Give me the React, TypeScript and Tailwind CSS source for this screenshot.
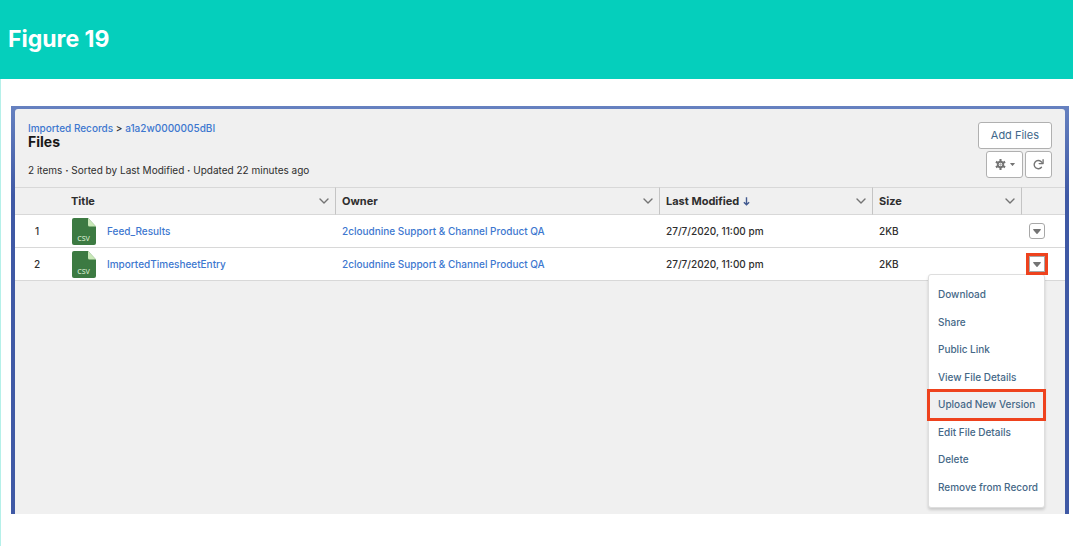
import { useState } from "react";
import { clsx } from "clsx";

const files = [
	{ title: "Feed_Results", owner: "2cloudnine Support & Channel Product QA", modified: "27/7/2020, 11:00 pm", size: "2KB" },
	{ title: "ImportedTimesheetEntry", owner: "2cloudnine Support & Channel Product QA", modified: "27/7/2020, 11:00 pm", size: "2KB" },
];

const menuItems = [
	"Download",
	"Share",
	"Public Link",
	"View File Details",
	"Upload New Version",
	"Edit File Details",
	"Delete",
	"Remove from Record",
];

function GearIcon() {
	return (
		<svg viewBox="0 0 24 24" className="size-[11px]" fill="none" stroke="#747474" aria-hidden="true">
			<circle cx="12" cy="12" r="6" strokeWidth="4" />
			<path d="M12 0v6M12 18v6M2 6l5 3M17 15l5 3M2 18l5-3M17 9l5-3" strokeWidth="4.500" />
			<circle cx="12" cy="12" r="1.500" strokeWidth="1.500" />
		</svg>
	);
}

function RefreshIcon() {
	return (
		<svg viewBox="0 0 24 24" className="size-[11px]" fill="none" stroke="#747474" aria-hidden="true">
			<path d="M18.500 18A9 9 0 1 1 17.500 5.500" strokeWidth="3" strokeLinecap="round" />
			<path d="M22 1.500v8.500h-8.500" strokeWidth="3" strokeLinecap="round" strokeLinejoin="round" />
			<path d="M17 5l4 4" strokeWidth="2.500" />
		</svg>
	);
}

function Chevron() {
	return (
		<svg viewBox="0 0 10 6" className="h-[6px] w-[10px]" fill="none" stroke="#747474" aria-hidden="true">
			<path d="M1 1l4 4 4-4" strokeWidth="1.400" strokeLinecap="round" strokeLinejoin="round" />
		</svg>
	);
}

function Caret({ className }: { className: string }) {
	return (
		<svg viewBox="0 0 8 5" className={className} fill="#747474" aria-hidden="true">
			<path d="M.6 0h6.800q.8.2.3.900L4.500 4.700q-.5.500-1 0L.3.900Q-.2.200.6 0z" />
		</svg>
	);
}

function CsvIcon() {
	return (
		<svg viewBox="0 0 24 27" className="h-[27px] w-6" role="img" aria-label="CSV file">
			<path d="M2 0h14l8 8.500V25a2 2 0 0 1-2 2H2a2 2 0 0 1-2-2V2a2 2 0 0 1 2-2z" fill="#3c7a42" />
			<path d="M16 0l8 8.500h-6.500A1.500 1.500 0 0 1 16 7z" fill="#c9e8b8" />
			<text x="11.500" y="22.500" textAnchor="middle" fill="#cfe6c9" className="font-['Noto_Sans',sans-serif] text-[7px]">
				CSV
			</text>
		</svg>
	);
}

function HeaderCell({ label, sorted, className }: { label: string; sorted?: boolean; className?: string }) {
	return (
		<th scope="col" className={clsx("border-y border-r border-y-[#d8d8d8] border-r-[#c4c4c4] p-0 text-left font-bold", className)}>
			<div className="flex items-center justify-between pr-1.5">
				<span className="flex items-center gap-1">
					{label}
					{sorted && (
						<svg viewBox="0 0 8 10" className="h-[9px] w-[7px]" fill="none" stroke="#41598f" aria-hidden="true">
							<path d="M4 0v8.500M1 5.800l3 3 3-3" strokeWidth="1.600" />
						</svg>
					)}
				</span>
				<button type="button" aria-label={`${label} column actions`}>
					<Chevron />
				</button>
			</div>
		</th>
	);
}

function RowMenu() {
	return (
		<ul className="absolute top-[18px] right-0 z-10 flex h-[234px] w-[117px] flex-col rounded-[3px] border border-[#dedede] bg-white py-1.5 shadow-[0_2px_3px_rgba(0,0,0,0.16)]">
			{menuItems.map((item) => (
				<li key={item} className="flex flex-1">
					<button
						type="button"
						className={clsx(
							"w-full pl-[9px] text-left text-[10px] whitespace-nowrap text-[#456887]",
							item === "Upload New Version" && "bg-[#f0f0f0] outline-[3px] -outline-offset-1 outline-[#ee421d]",
						)}
					>
						{item}
					</button>
				</li>
			))}
		</ul>
	);
}

export default function App() {
	const [openRow, setOpenRow] = useState<number | null>(1);

	return (
		<div className="min-h-screen border-l border-[#b5f0e9] bg-white font-[Inter,'Liberation_Sans',sans-serif] text-[#2e2e2e]">
			<header className="-ml-px flex h-[79px] items-center bg-[#05cfbc] pb-0.5 pl-2">
				<h1 className="text-[23px] leading-7 font-bold text-white">Figure 19</h1>
			</header>

			<main className="pt-[27px] pr-1 pl-[10px]">
				<div className="bg-[linear-gradient(#6681c0,#3f59a5_90px)] px-1 pt-[3px]">
					<section className="min-h-[405px] rounded-t-[3px] bg-[#f0f0f0]">
						<div className="flex h-[78px] items-start justify-between px-[13px] pt-[13px]">
							<div>
								<nav className="text-[10px] leading-3 font-medium" aria-label="Breadcrumb">
									<a href="#records" className="text-[#3d77cf]">Imported Records</a>
									{" > "}
									<a href="#record" className="text-[#3d77cf]">a1a2w0000005dBI</a>
								</nav>
								<h2 className="text-[14px] leading-4 font-bold text-[#181818]">Files</h2>
								<p className="mt-3 text-[10px] leading-4">
									2 items <b>·</b> Sorted by Last Modified <b>·</b> Updated 22 minutes ago
								</p>
							</div>
							<div className="flex flex-col items-end gap-0.5">
								<button type="button" className="h-[27px] rounded-[3px] border border-[#b0b0b0] bg-white px-3 text-[11px] text-[#41678a]">
									Add Files
								</button>
								<div className="flex gap-0.5">
									<button type="button" aria-label="List view controls" className="flex h-[27px] w-[37px] items-center justify-center gap-1 rounded-[3px] border border-[#b0b0b0] bg-white">
										<GearIcon />
										<Caret className="h-[3px] w-[5px]" />
									</button>
									<button type="button" aria-label="Refresh" className="flex h-[27px] w-[27px] items-center justify-center rounded-[3px] border border-[#b0b0b0] bg-white">
										<RefreshIcon />
									</button>
								</div>
							</div>
						</div>

						<table className="w-full table-fixed border-separate border-spacing-0 text-[11px]">
							<thead>
								<tr className="h-7">
									<th aria-label="Row" className="w-12 border-y border-[#d8d8d8] p-0" />
									<HeaderCell label="Title" className="pl-2" />
									<HeaderCell label="Owner" className="w-[324px] pl-1.5" />
									<HeaderCell label="Last Modified" sorted className="w-[213px] pl-1.5" />
									<HeaderCell label="Size" className="w-[149px] pl-1.5" />
									<th aria-label="Actions" className="w-[43px] border-y border-[#d8d8d8] p-0" />
								</tr>
							</thead>
							<tbody className="text-[10px] font-medium">
								{files.map((file, i) => (
									<tr key={file.title} className="h-[33px] bg-white *:border-b *:border-[#d8d8d8] *:p-0">
										<td className="text-center">
											<span className="-ml-1">{i + 1}</span>
										</td>
										<td>
											<div className="flex items-center gap-[11px] pl-[9px]">
												<CsvIcon />
												<a href="#file" className="text-[#3d77cf]">{file.title}</a>
											</div>
										</td>
										<td>
											<a href="#owner" className="ml-1.5 text-[#3d77cf]">{file.owner}</a>
										</td>
										<td>
											<span className="ml-1.5">{file.modified}</span>
										</td>
										<td>
											<span className="ml-1.5">{file.size}</span>
										</td>
										<td>
											<div className="relative ml-[7px] w-4">
												<button
													type="button"
													aria-label={`Actions for ${file.title}`}
													aria-expanded={openRow === i}
													onClick={() => setOpenRow(openRow === i ? null : i)}
													className={clsx(
														"relative z-20 flex size-4 items-center justify-center border border-[#a8a8a8] bg-white",
														i === 1 ? "outline-[3px] outline-[#ee421d]" : "rounded-[3px]",
													)}
												>
													<Caret className="h-[5px] w-2" />
												</button>
												{openRow === i && <RowMenu />}
											</div>
										</td>
									</tr>
								))}
							</tbody>
						</table>
					</section>
				</div>
			</main>
		</div>
	);
}
